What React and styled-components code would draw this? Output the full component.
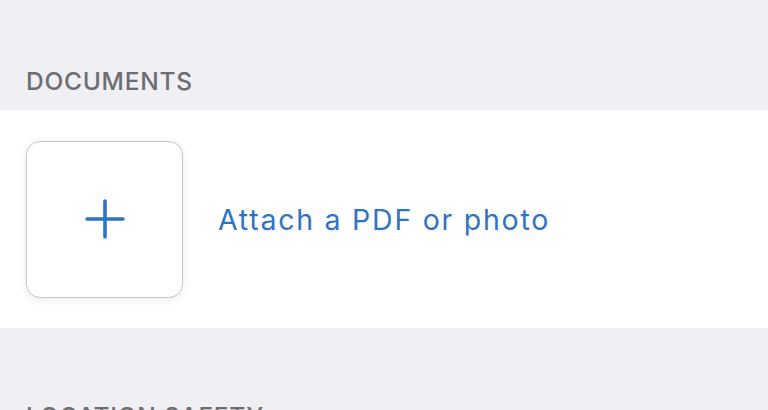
import React from "react";
import styled, { createGlobalStyle } from "styled-components";

const GlobalStyle = createGlobalStyle`
  html, body {
    margin: 0;
    padding: 0;
    background: #efeff4;
    font-family: Inter, "Liberation Sans", Arial, sans-serif;
    overflow: hidden;
  }
`;

const Page = styled.div`
  width: 768px;
  height: 410px;
  background: #efeff4;
  overflow: hidden;
`;

const SectionHeader = styled.div`
  padding: ${(p) => p.$top}px 26px 0;
  height: ${(p) => p.$height}px;
  box-sizing: border-box;
  font-size: 24.5px;
  font-weight: 500;
  line-height: 1;
  color: #6d6d72;
  letter-spacing: 0.75px;
  text-transform: uppercase;
  white-space: nowrap;
`;

const Row = styled.div`
  background: #ffffff;
  height: 218px;
  display: flex;
  align-items: center;
  padding: 0 26px;
  gap: 35px;
`;

const AddTile = styled.button`
  width: 157px;
  height: 157px;
  box-sizing: border-box;
  border: 1.5px solid #c6c6c6;
  border-radius: 14px;
  background: #ffffff;
  box-shadow: 0 2px 8px rgba(0, 0, 0, 0.08);
  display: flex;
  align-items: center;
  justify-content: center;
  padding: 0;
  cursor: pointer;
`;

const AttachLabel = styled.span`
  font-size: 28.5px;
  color: #2f73c3;
  letter-spacing: 1.75px;
`;

function PlusIcon() {
  return (
    <svg width="40" height="40" viewBox="0 0 40 40">
      <path
        d="M20 2 V38 M2 20 H38"
        stroke="#2f73c3"
        strokeWidth="3.6"
        strokeLinecap="round"
        fill="none"
      />
    </svg>
  );
}

export default function App() {
  return (
    <Page>
      <GlobalStyle />
      <SectionHeader $top={69} $height={110}>Documents</SectionHeader>
      <Row>
        <AddTile>
          <PlusIcon />
        </AddTile>
        <AttachLabel>Attach a PDF or photo</AttachLabel>
      </Row>
      <SectionHeader $top={76} $height={120}>Location Safety</SectionHeader>
    </Page>
  );
}
